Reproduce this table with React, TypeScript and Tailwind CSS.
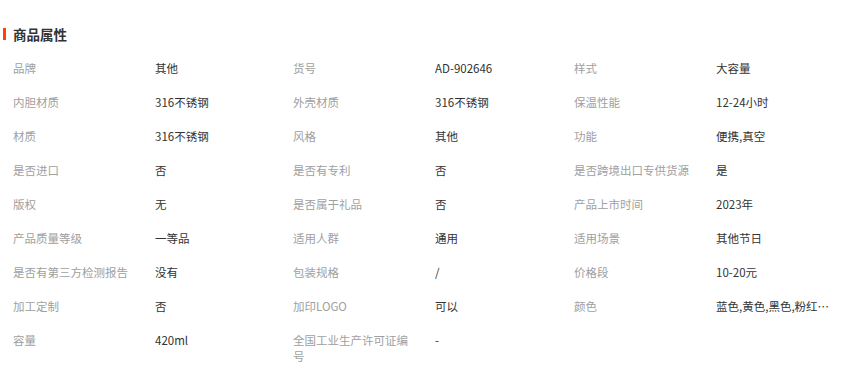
const attrs: [string, string][] = [
  ['品牌', '其他'],
  ['货号', 'AD-902646'],
  ['样式', '大容量'],
  ['内胆材质', '316不锈钢'],
  ['外壳材质', '316不锈钢'],
  ['保温性能', '12-24小时'],
  ['材质', '316不锈钢'],
  ['风格', '其他'],
  ['功能', '便携,真空'],
  ['是否进口', '否'],
  ['是否有专利', '否'],
  ['是否跨境出口专供货源', '是'],
  ['版权', '无'],
  ['是否属于礼品', '否'],
  ['产品上市时间', '2023年'],
  ['产品质量等级', '一等品'],
  ['适用人群', '通用'],
  ['适用场景', '其他节日'],
  ['是否有第三方检测报告', '没有'],
  ['包装规格', '/'],
  ['价格段', '10-20元'],
  ['加工定制', '否'],
  ['加印LOGO', '可以'],
  ['颜色', '蓝色,黄色,黑色,粉红色,白色'],
  ['容量', '420ml'],
  ['全国工业生产许可证编号', '-'],
];

export default function App() {
  return (
    <div
      className="w-[849px] h-[368px] bg-white overflow-hidden"
      style={{ fontFamily: '"Noto Sans CJK SC", "Noto Sans", sans-serif' }}
    >
      {/* 标题 */}
      <div className="flex items-center pt-[26px] h-[42px]">
        <span className="w-[3px] h-[12px] bg-[#ff4400] ml-[3px]" />
        <h2 className="ml-[7px] text-[13.5px] font-bold text-[#333] leading-[16px]">商品属性</h2>
      </div>

      {/* 属性表 */}
      <div className="grid grid-cols-[280px_281px_274px] pl-[13px] pt-[18px] gap-y-[18px]">
        {attrs.map(([k, v], i) => (
          <div key={i} className="flex text-[11.5px] leading-[16px]">
            <span className="w-[122px] mr-[20px] text-[#a0a0a0]">{k}</span>
            <span className="w-[118px] text-[#333] truncate">{v}</span>
          </div>
        ))}
      </div>
    </div>
  );
}
